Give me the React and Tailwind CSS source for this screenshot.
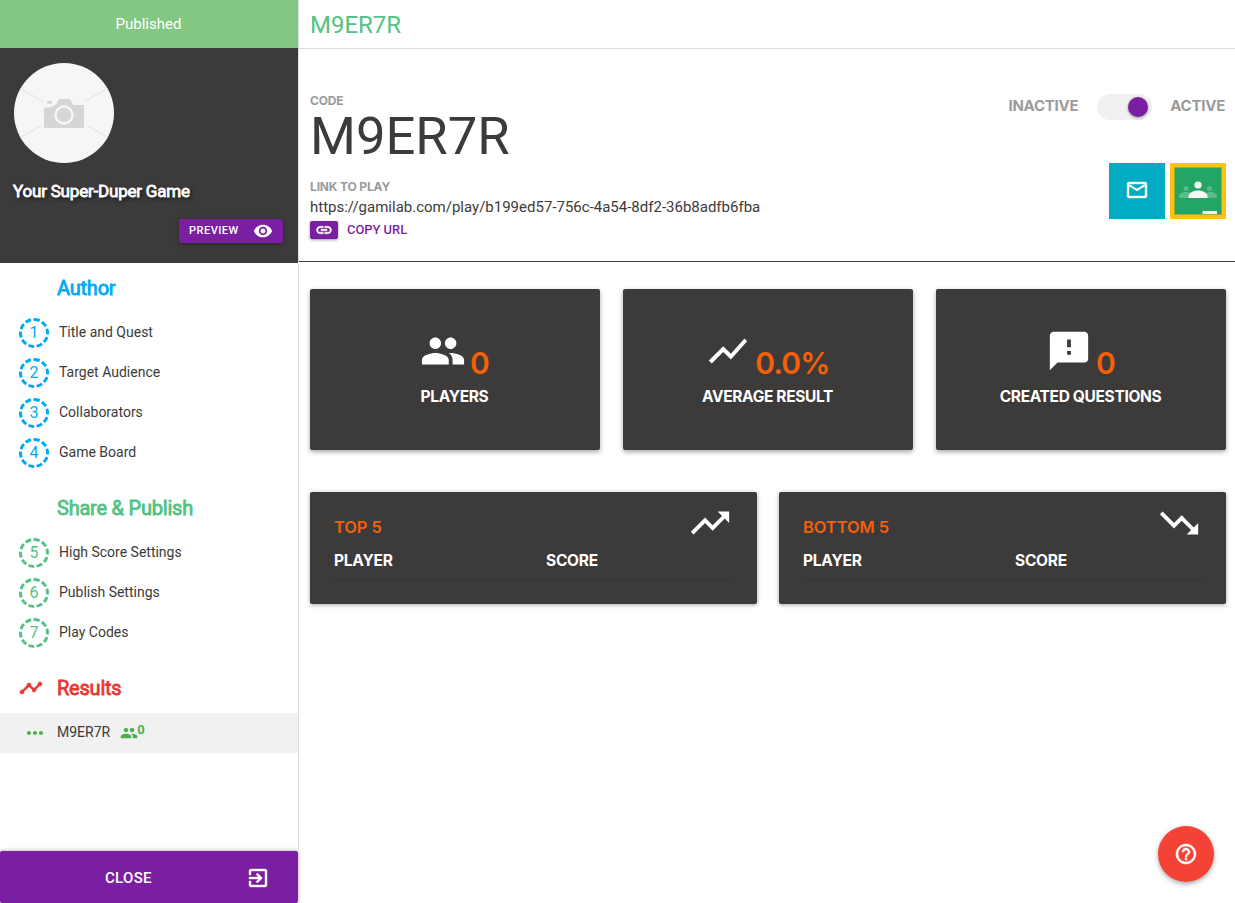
import React from "react";
import {
  MdPeople,
  MdShowChart,
  MdFeedback,
  MdTrendingUp,
  MdTrendingDown,
  MdVisibility,
  MdLink,
  MdMailOutline,
  MdHelpOutline,
  MdExitToApp,
  MdMoreHoriz,
  MdTimeline,
} from "react-icons/md";

const authorSteps = [
  [1, "Title and Quest"],
  [2, "Target Audience"],
  [3, "Collaborators"],
  [4, "Game Board"],
];
const publishSteps = [
  [5, "High Score Settings"],
  [6, "Publish Settings"],
  [7, "Play Codes"],
];

function Avatar() {
  return (
    <div className="size-[100px] overflow-hidden rounded-full bg-[#f6f6f6]">
      <svg viewBox="0 0 100 100" className="size-full">
        <g stroke="#e6e6e6" strokeWidth="1.4">
          <path d="M5 25 30 39M95 25 69 39M5 75 28 62.500M95 75 73 62.500" />
        </g>
        <path
          fill="#d6d6d6"
          d="M30 45 39 43.500 42.500 41 45 36H56L59 42H70V65H30ZM33 38.500 38 37.500V40.500L33 41Z"
        />
        <circle cx="50" cy="52" r="8.500" fill="#d6d6d6" stroke="#f6f6f6" strokeWidth="2.400" />
      </svg>
    </div>
  );
}

function ClassroomIcon() {
  return (
    <svg viewBox="0 0 56 56" className="size-14">
      <path fill="#ffc112" d="M0 0h56v56H0z" />
      <path fill="#a3ad2b" d="M4 4h48v48H4z" />
      <path fill="#23a566" d="M5 5h46v46H5z" />
      <g fill="#5bbb8a">
        <circle cx="16" cy="25.500" r="2.500" />
        <circle cx="39.500" cy="25.500" r="2.500" />
        <path d="M9 35v-1.500c0-2.500 3-4.500 7-4.500 2 0 4 .5 5 1.500V35zM47 35v-1.500c0-2.500-3-4.500-7-4.500-2 0-4 .5-5 1.500V35z" />
      </g>
      <g fill="#f7f7f7">
        <circle cx="28" cy="22" r="3.600" />
        <path d="M18.500 35v-1.500c0-3.500 4.500-6 9.500-6s9.500 2.500 9.500 6V35z" />
        <path fill="#f1f1f1" d="M32.500 48H47v3H32.500z" />
      </g>
    </svg>
  );
}

function Steps({ items, tone }) {
  return (
    <ul>
      {items.map(([n, label]) => (
        <li key={n} className="flex h-10 items-center pl-[19px]">
          <span
            className={
              "mt-0.5 flex size-[30px] items-center justify-center rounded-full border-3 border-dashed text-[16px] " +
              tone
            }
          >
            {n}
          </span>
          <span className="ml-2.5 text-[14px] text-[#3c3b39]">{label}</span>
        </li>
      ))}
    </ul>
  );
}

function Stat({ icon: Icon, value, label }) {
  return (
    <div className="flex h-[161px] flex-col items-center rounded-[2px] bg-[#3d3b39] pt-[39px] pr-px font-['Inter',sans-serif] font-bold shadow-[0_2px_5px_rgba(0,0,0,0.35)]">
      <div className="flex h-[50px]">
        <Icon className="size-[46px] text-white" />
        <span className="mt-[17px] ml-1 text-[30px] leading-9 font-semibold tracking-[-0.8px] text-[#f2600c]">
          {value}
        </span>
      </div>
      <span className="mt-[9px] text-[15.5px] leading-5 tracking-[-0.35px] text-white">{label}</span>
    </div>
  );
}

function Ranking({ icon: Icon, title }) {
  return (
    <div className="h-[112px] rounded-[2px] bg-[#3d3b39] px-6 font-['Inter',sans-serif] font-bold shadow-[0_1px_4px_rgba(0,0,0,0.35)]">
      <div className="flex h-[58px] justify-between">
        <h3 className="mt-[23px] text-[16.5px] leading-6 font-semibold tracking-[-0.1px] text-[#f2600c]">{title}</h3>
        <Icon className="mt-2 size-[46px] text-white" />
      </div>
      <div className="flex h-[30px] border-b border-[#353432] text-[15.5px] leading-[22px] tracking-[-0.25px] text-white">
        <span className="w-[212px]">PLAYER</span>
        <span>SCORE</span>
      </div>
    </div>
  );
}

export default function App() {
  return (
    <div className="flex h-[903px] w-[1235px] overflow-hidden bg-white font-['Roboto',sans-serif]">
      <aside className="flex w-[299px] shrink-0 flex-col">
        <div className="flex min-h-0 flex-1 flex-col border-r border-[#dcdcdc]">
          <div className="flex h-12 shrink-0 items-center justify-center bg-[#82c883] pr-px text-[15px] text-white">
            Published
          </div>
          <div className="flex h-[215px] shrink-0 flex-col bg-[#3d3b39] pt-[15px] pl-3.5">
            <Avatar />
            <h2 className="mt-[16px] -ml-px text-[17px] leading-6 tracking-[-0.2px] text-white [-webkit-text-stroke:0.8px_white] [text-shadow:2px_2px_4px_rgba(0,0,0,0.8)]">
              Your Super-Duper Game
            </h2>
            <button className="mt-4 mr-[15px] flex h-6 w-[104px] items-center self-end rounded-[2px] bg-[#7b1fa2] pl-[10px] text-[11px] font-medium text-white shadow-[0_1px_4px_rgba(0,0,0,0.4)]">
              <span className="w-[64px] text-left tracking-[0.5px]">PREVIEW</span>
              <MdVisibility className="size-5" />
            </button>
          </div>
          <nav>
            <h3 className="h-[49px] pt-[11px] pl-[57px] text-[20px] leading-7 tracking-[-0.22px] text-[#03a9f4] [-webkit-text-stroke:0.8px_#03a9f4]">
              Author
            </h3>
            <Steps items={authorSteps} tone="border-[#03a9f4] text-[#03a9f4]" />
            <h3 className="h-[60px] pt-[22px] pl-[57px] text-[20px] leading-7 tracking-[-0.22px] text-[#53c283] [-webkit-text-stroke:0.8px_#53c283]">
              Share &amp; Publish
            </h3>
            <Steps items={publishSteps} tone="border-[#53c283] text-[#53c283]" />
            <div className="flex h-[61px] pt-[22px] pl-[19px] text-[#e53935]">
              <MdTimeline className="mt-0.5 size-6 stroke-current [stroke-width:0.7px] [&>path:first-child]:stroke-none" />
              <h3 className="ml-3.5 text-[20px] leading-7 tracking-[-0.22px] [-webkit-text-stroke:0.8px_#e53935]">
                Results
              </h3>
            </div>
            <div className="flex h-10 items-center bg-[#f1f1f1] pl-[23px]">
              <MdMoreHoriz className="size-6 text-[#4caf50]" />
              <span className="mb-0.5 ml-2.5 text-[14px] text-[#3c3b39]">M9ER7R</span>
              <MdPeople className="ml-2.5 size-[18px] text-[#4caf50]" />
              <span className="-ml-px mb-1.5 text-[13px] font-bold text-[#4caf50]">0</span>
            </div>
          </nav>
        </div>
        <button className="mr-px flex h-[52px] items-center rounded-[2px] bg-[#7b1fa2] text-[15px] text-white shadow-[0_0_4px_rgba(0,0,0,0.35)]">
          <span className="mt-0.5 w-[246px] pl-[105px] text-left font-medium tracking-[0.3px]">CLOSE</span>
          <MdExitToApp className="mt-0.5 size-6 stroke-current [stroke-width:0.4px] [&>path:first-child]:stroke-none" />
        </button>
      </aside>

      <main className="min-w-0 flex-1">
        <header className="flex h-[49px] items-center border-b border-[#dcdcdc] pt-0.5 pl-[11px] text-[24px] text-[#53c283]">
          M9ER7R
        </header>
        <section className="flex h-[213px] justify-between border-b border-[#3d3b39] pr-[9px] pl-[11px]">
          <div>
            <div className="mt-[44px] font-['Inter',sans-serif] text-[12px] leading-4 font-bold tracking-[-0.15px] text-[#9b9b9b]">
              CODE
            </div>
            <div className="h-[70px] text-[52.6px] leading-[54px] text-[#3d3b39]">M9ER7R</div>
            <div className="font-['Inter',sans-serif] text-[12px] leading-4 font-bold tracking-[-0.15px] text-[#9b9b9b]">
              LINK TO PLAY
            </div>
            <div className="text-[15px] leading-6 text-[#3d3b39]">
              https://gamilab.com/play/b199ed57-756c-4a54-8df2-36b8adfb6fba
            </div>
            <div className="mt-0.5 flex items-center text-[#7b1fa2]">
              <span className="flex h-[18px] w-7 items-center justify-center rounded-[2px] bg-[#7b1fa2] text-white shadow-[0_1px_3px_rgba(0,0,0,0.4)]">
                <MdLink className="size-[18px] stroke-current [stroke-width:0.7px] [&>path:first-child]:stroke-none" />
              </span>
              <span className="ml-[9px] text-[12.9px] leading-[18px] font-medium">COPY URL</span>
            </div>
          </div>
          <div className="flex flex-col items-end">
            <div className="mt-[44px] flex h-[26px] items-center font-['Inter',sans-serif] text-[15px] font-bold tracking-[-0.25px] text-[#9b9b9b]">
              <span>INACTIVE</span>
              <span className="mr-[18px] ml-[19px] mt-0.5 flex h-[26px] w-[55px] items-center justify-end rounded-full bg-[#f1f1f1] pr-1">
                <span className="size-5 rounded-full bg-[#7b1fa2] shadow-[0_1px_3px_rgba(0,0,0,0.4)]" />
              </span>
              <span className="pr-px">ACTIVE</span>
            </div>
            <div className="mt-[44px] flex gap-[5px]">
              <span className="flex size-14 items-center justify-center bg-[#00acc4]">
                <MdMailOutline className="mb-0.5 size-6 stroke-current [stroke-width:0.4px] text-white [&>path:first-child]:stroke-none" />
              </span>
              <ClassroomIcon />
            </div>
          </div>
        </section>
        <section className="grid grid-cols-3 gap-[23px] pt-[27px] pr-[9px] pl-[11px]">
          <Stat icon={MdPeople} value="0" label="PLAYERS" />
          <Stat icon={MdShowChart} value="0.0%" label="AVERAGE RESULT" />
          <Stat icon={MdFeedback} value="0" label="CREATED QUESTIONS" />
        </section>
        <section className="grid grid-cols-2 gap-[22px] pt-[42px] pr-[9px] pl-[11px]">
          <Ranking icon={MdTrendingUp} title="TOP 5" />
          <Ranking icon={MdTrendingDown} title="BOTTOM 5" />
        </section>
      </main>

      <button className="fixed top-[826px] left-[1158px] flex size-14 items-center justify-center rounded-full bg-[#f44336] text-white shadow-[0_2px_5px_rgba(0,0,0,0.35)]">
        <MdHelpOutline className="size-6 stroke-current [stroke-width:0.5px] [&>path:first-child]:stroke-none" />
      </button>
    </div>
  );
}
